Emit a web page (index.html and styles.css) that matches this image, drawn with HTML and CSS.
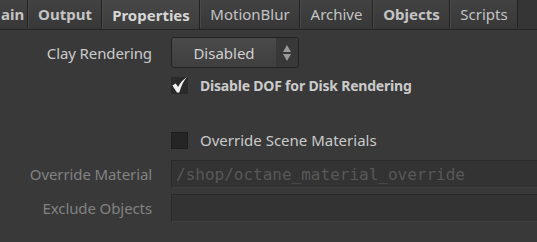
FILE: index.html
```html
<!DOCTYPE html>
<html lang="en">
<head>
    <meta charset="UTF-8">
    <title>Octane ROP - Properties</title>
    <link rel="stylesheet" href="styles.css">
</head>
<body>
    <div class="tab-bar">
        <div class="tab tab-first bold">ain</div>
        <div class="tab tab-output bold">Output</div>
        <div class="tab tab-props active bold">Properties</div>
        <div class="tab tab-motion">MotionBlur</div>
        <div class="tab tab-archive">Archive</div>
        <div class="tab tab-objects bold">Objects</div>
        <div class="tab tab-scripts">Scripts</div>
    </div>

    <div class="panel">
        <div class="row row-menu">
            <div class="label">Clay Rendering</div>
            <div class="menu">
                <span class="menu-value">Disabled</span>
                <span class="menu-arrows">
                    <svg width="10" height="18" viewBox="0 0 10 18">
                        <path d="M5 1 L9 8 L1 8 Z" fill="#9a9a9a"/>
                        <path d="M1 10 L9 10 L5 17 Z" fill="#9a9a9a"/>
                    </svg>
                </span>
            </div>
        </div>

        <div class="row row-check">
            <div class="label"></div>
            <div class="check checked">
                <svg width="18" height="18" viewBox="0 0 18 18">
                    <path d="M1.5 9.5 L5 7.5 L7.5 11 C9.5 7 12.5 3.5 17 0.5 C13.5 4.5 10.8 9.5 8.8 17 L6.3 17 Z" fill="#f2f2f2"/>
                </svg>
            </div>
            <span class="check-text bold">Disable DOF for Disk Rendering</span>
        </div>

        <div class="row row-check row-spaced">
            <div class="label"></div>
            <div class="check"></div>
            <span class="check-text">Override Scene Materials</span>
        </div>

        <div class="row row-field row-field-first">
            <div class="label disabled">Override Material</div>
            <div class="field mono">/shop/octane_material_override</div>
        </div>

        <div class="row row-field">
            <div class="label disabled">Exclude Objects</div>
            <div class="field"></div>
        </div>
    </div>
</body>
</html>
```

FILE: styles.css
```css
body {
    margin: 0;
    width: 537px;
    height: 242px;
    overflow: hidden;
    background-color: #393939;
    font-family: 'Noto Sans', sans-serif;
    font-size: 14px;
    color: #cbcbcb;
}
.bold {
    font-weight: bold;
}
.tab-bar {
    display: flex;
    height: 29px;
    background-color: #353535;
    border-bottom: 1px solid #262626;
    overflow: hidden;
}
.tab {
    display: flex;
    align-items: center;
    justify-content: center;
    box-sizing: border-box;
    flex-shrink: 0;
    height: 28px;
    background: linear-gradient(#424242, #383838);
    border-right: 1px solid #222;
    border-left: 1px solid #4a4a4a;
    color: #c4c4c4;
    font-size: 15px;
}
.tab-first {
    width: 28px;
    border-left: none;
    justify-content: flex-start;
    padding-left: 1px;
}
.tab-output { width: 74px; }
.tab-props { width: 98px; }
.tab-motion { width: 100px; }
.tab-archive { width: 73px; }
.tab-objects { width: 77px; }
.tab-scripts { width: 68px; }
.tab.active {
    background: linear-gradient(#474747, #3d3d3d);
    height: 29px;
    color: #d6d6d6;
}
.panel {
    padding-top: 7px;
}
.row {
    display: flex;
    align-items: center;
}
.label {
    width: 152px;
    flex-shrink: 0;
    text-align: right;
    margin-right: 19px;
    font-size: 15px;
    letter-spacing: -0.1px;
}
.label.disabled {
    color: #828282;
}
.row-menu {
    height: 31px;
}
.menu {
    display: flex;
    width: 126px;
    height: 29px;
    border: 1px solid #222;
    border-radius: 3px;
    background: linear-gradient(#4a4a4a, #3f3f3f);
    overflow: hidden;
}
.menu-value {
    flex: 1;
    display: flex;
    align-items: center;
    justify-content: center;
    font-size: 15px;
    color: #d0d0d0;
}
.menu-arrows {
    width: 22px;
    display: flex;
    align-items: center;
    justify-content: center;
    background-color: #383838;
}
.row-check {
    height: 22px;
    margin-top: 6px;
}
.row-spaced {
    margin-top: 33px;
}
.check {
    width: 17px;
    height: 17px;
    background-color: #252525;
    border: 1px solid #1e1e1e;
    box-sizing: border-box;
    display: flex;
    align-items: center;
    justify-content: center;
    margin-right: 12px;
}
.check.checked {
    border: none;
    background-color: #2a2a2a;
}
.check-text {
    font-size: 15px;
}
.check-text.bold {
    font-size: 14px;
    letter-spacing: -0.2px;
}
.row-field {
    height: 28px;
    margin-top: 6px;
}
.row-field-first {
    margin-top: 9px;
}
.field {
    flex: 1;
    height: 28px;
    box-sizing: border-box;
    background-color: #333333;
    border-top: 1px solid #2a2a2a;
    border-left: 1px solid #2a2a2a;
    border-bottom: 1px solid #3f3f3f;
    padding-left: 4px;
    display: flex;
    align-items: center;
}
.mono {
    font-family: 'DejaVu Sans Mono', monospace;
    font-size: 16px;
    color: #585858;
}
```
